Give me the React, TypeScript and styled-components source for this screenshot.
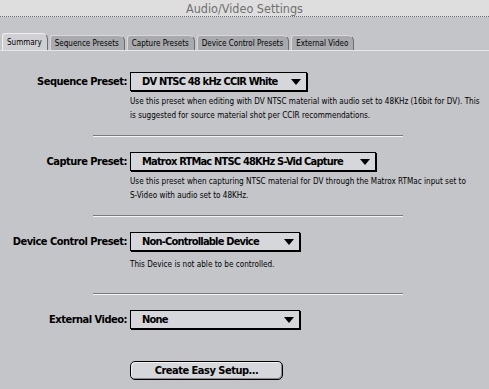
import React from "react";
import styled, { createGlobalStyle } from "styled-components";

const Global = createGlobalStyle`
  html, body { margin: 0; padding: 0; background: #c4c5c9; }
  body { width: 489px; height: 389px; overflow: hidden; }
`;

const BOLD = `"DejaVu Sans Condensed", "DejaVu Sans", sans-serif`;
const SMALL = `"Liberation Sans Narrow", "DejaVu Sans Condensed", sans-serif`;

const Window = styled.div`
  width: 489px;
  height: 389px;
  background: #c4c5c9;
  display: flex;
  flex-direction: column;
`;

const TitleBar = styled.div`
  height: 16px;
  background: #dedede;
  border-bottom: 1px dotted #6e6e6e;
  display: flex;
  align-items: center;
  justify-content: center;
  font-family: "DejaVu Sans Condensed", sans-serif;
  font-size: 12.5px;
  color: #707070;
`;

const TabStrip = styled.div`
  margin-top: 17px;
  height: 16px;
  display: flex;
  align-items: flex-end;
  padding-left: 2px;
  border-bottom: 1px solid #e6e6e8;
`;

const Tab = styled.div<{ $active?: boolean }>`
  height: ${(p) => (p.$active ? 16 : 14)}px;
  padding: 0 5px 0 4px;
  margin-right: 2px;
  display: flex;
  align-items: center;
  white-space: nowrap;
  font-family: ${SMALL};
  font-size: 8px;
  color: #000;
  background: ${(p) => (p.$active ? "#cfd0d3" : "#a9aaae")};
  border-top: 1px solid ${(p) => (p.$active ? "#f0f0f0" : "#d8d8d8")};
  border-left: 1px solid ${(p) => (p.$active ? "#f0f0f0" : "#d8d8d8")};
  border-right: 1px solid #6c6c70;
  border-radius: 3px 6px 0 0;
`;

const Form = styled.div`
  display: flex;
  flex-direction: column;
  padding-top: 21px;
`;

const Row = styled.div`
  display: grid;
  grid-template-columns: 127px auto;
  column-gap: 3px;
  align-items: center;
`;

const Label = styled.div`
  text-align: right;
  white-space: nowrap;
  font-family: ${BOLD};
  font-weight: bold;
  font-size: 11px;
  letter-spacing: -0.5px;
  color: #000;
`;

const Popup = styled.div<{ $w: number }>`
  width: ${(p) => p.$w}px;
  height: 19px;
  box-sizing: border-box;
  background: #d6d7db;
  border: 1px solid #000;
  box-shadow: 1px 1px 0 #000;
  display: flex;
  align-items: center;
  justify-content: space-between;
  padding: 0 5px 0 11px;
  white-space: nowrap;
  font-family: ${BOLD};
  font-weight: bold;
  font-size: 11px;
  letter-spacing: -0.8px;
  color: #000;
`;

const Arrow = styled.svg`
  width: 10px;
  height: 6px;
  flex: none;
`;

const Desc = styled.div<{ $mt?: number }>`
  grid-column: 2;
  margin-top: ${(p) => p.$mt ?? 3}px;
  white-space: nowrap;
  font-family: ${SMALL};
  font-size: 8.1px;
  line-height: 14px;
  color: #000;
`;

const Separator = styled.div<{ $mt: number; $mb: number }>`
  margin: ${(p) => p.$mt}px 0 ${(p) => p.$mb}px 93px;
  width: 310px;
  height: 1px;
  background: #7a7a7e;
  border-bottom: 1px solid #f4f4f4;
`;

const ButtonRow = styled.div`
  padding-left: 130px;
  margin-top: 32px;
`;

const Button = styled.div`
  width: 153px;
  height: 19px;
  box-sizing: border-box;
  border: 1px solid #000;
  border-radius: 5px;
  background: #d6d7db;
  box-shadow: inset -1px -1px 0 #8a8a8e, inset 1px 1px 0 #f2f2f2;
  display: flex;
  align-items: center;
  justify-content: center;
  font-family: ${BOLD};
  font-weight: bold;
  font-size: 11px;
  letter-spacing: -0.5px;
  color: #000;
`;

const Select = ({ w, value }: { w: number; value: string }) => (
  <Popup $w={w}>
    <span>{value}</span>
    <Arrow viewBox="0 0 10 6">
      <polygon points="0,0 10,0 5,6" fill="#000" />
    </Arrow>
  </Popup>
);

export default function App() {
  return (
    <Window>
      <Global />
      <TitleBar>Audio/Video Settings</TitleBar>
      <TabStrip>
        <Tab $active>Summary</Tab>
        <Tab>Sequence Presets</Tab>
        <Tab>Capture Presets</Tab>
        <Tab>Device Control Presets</Tab>
        <Tab>External Video</Tab>
      </TabStrip>
      <Form>
        <Row>
          <Label>Sequence Preset:</Label>
          <Select w={177} value="DV NTSC 48 kHz CCIR White" />
          <Desc>
            Use this preset when editing with DV NTSC material with audio set to 48KHz (16bit for DV). This
            <br />
            is suggested for source material shot per CCIR recommendations.
          </Desc>
        </Row>
        <Separator $mt={13} $mb={15} />
        <Row>
          <Label>Capture Preset:</Label>
          <Select w={246} value="Matrox RTMac NTSC 48KHz S-Vid Capture" />
          <Desc>
            Use this preset when capturing NTSC material for DV through the Matrox RTMac input set to
            <br />
            S-Video with audio set to 48KHz.
          </Desc>
        </Row>
        <Separator $mt={13} $mb={15} />
        <Row>
          <Label>Device Control Preset:</Label>
          <Select w={170} value="Non-Controllable Device" />
          <Desc $mt={6}>This Device is not able to be controlled.</Desc>
        </Row>
        <Separator $mt={22} $mb={15} />
        <Row>
          <Label>External Video:</Label>
          <Select w={170} value="None" />
        </Row>
        <ButtonRow>
          <Button>Create Easy Setup...</Button>
        </ButtonRow>
      </Form>
    </Window>
  );
}
